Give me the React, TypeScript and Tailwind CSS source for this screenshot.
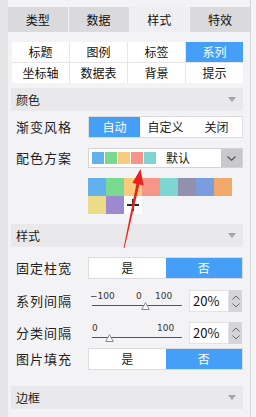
const PALETTE = ['#63b1ec', '#79d98e', '#f8cb80', '#f7958a', '#7dd6cf', '#9191ae', '#7a9ce0', '#f0a86b']

function Caret() {
  return (
    <svg width="8" height="5" viewBox="0 0 8 5">
      <path d="M0 0h8L4 5z" fill="#a6a6aa" />
    </svg>
  )
}

function SectionHeader(props: { title: string; className?: string }) {
  return (
    <div
      className={`ml-[3px] mr-[7px] flex h-[23px] items-center justify-between bg-[#e9e9eb] pl-[5px] pr-[7px] text-[12px] text-[#222] ${props.className ?? ''}`}
    >
      <span>{props.title}</span>
      <Caret />
    </div>
  )
}

function Row(props: { label: string; className?: string; children: React.ReactNode }) {
  return (
    <div className={`ml-[3px] mr-[7px] flex items-center ${props.className ?? ''}`}>
      <div className="w-[77px] shrink-0 pl-[5px] text-[13px] tracking-[1px] text-[#222]">{props.label}</div>
      {props.children}
    </div>
  )
}

function Seg(props: { items: string[]; active: number }) {
  return (
    <div className="flex h-[22px] flex-1 border border-[#dcdce0] bg-white">
      {props.items.map((t, i) => (
        <div
          key={t}
          className={`flex flex-1 items-center justify-center text-[12px] ${
            i === props.active ? 'bg-[#459ff6] text-white' : 'text-[#222]'
          }`}
        >
          {t}
        </div>
      ))}
    </div>
  )
}

function NumberBox() {
  return (
    <div className="ml-[7px] flex">
      <div className="flex h-[22px] w-[40px] items-center border border-[#e2e2e6] bg-white pl-[3px] text-[13px] text-[#111]">
        20%
      </div>
      <div className="flex h-[22px] w-[13px] flex-col items-center justify-center gap-[3px] bg-[#d5d5d9]">
        <svg width="8" height="5" viewBox="0 0 8 5">
          <path d="M0.5 4.5L4 1l3.5 3.5" fill="none" stroke="#666" strokeWidth="1" />
        </svg>
        <svg width="8" height="5" viewBox="0 0 8 5">
          <path d="M0.5 0.5L4 4l3.5-3.5" fill="none" stroke="#666" strokeWidth="1" />
        </svg>
      </div>
    </div>
  )
}

function Slider(props: { marks: { text: string; left: number }[]; thumb: number }) {
  return (
    <div className="relative ml-[4px] h-[22px] w-[90px] shrink-0 font-['DejaVu_Sans',sans-serif] text-[9px] leading-none text-[#333]">
      {props.marks.map((m) => (
        <span key={m.text} className="absolute top-[2px]" style={{ left: m.left }}>
          {m.text}
        </span>
      ))}
      <div className="absolute left-0 right-0 top-[15px] h-px bg-[#555]" />
      <svg className="absolute top-[12px]" style={{ left: props.thumb - 4 }} width="9" height="8" viewBox="0 0 9 8">
        <path d="M4.5 0.7L8.3 7.5H0.7z" fill="#fff" stroke="#888" strokeWidth="1" />
      </svg>
    </div>
  )
}

export default function App() {
  return (
    <div className="relative flex h-[417px] w-[256px] overflow-hidden bg-[#f3f3f5] font-['Noto_Sans_CJK_SC',sans-serif] text-[#222]">
      <div className="w-[8px] shrink-0 bg-[#e5e5e7]" />
      <div className="w-[242px] shrink-0 pt-[7px]">
        <div className="flex h-[25px] gap-px">
          {['类型', '数据', '样式', '特效'].map((t) => (
            <div
              key={t}
              className={`flex flex-1 items-center justify-center text-[12px] text-[#111] ${
                t === '样式' ? 'bg-[#efeff2]' : 'bg-[#dadadd]'
              }`}
            >
              {t}
            </div>
          ))}
        </div>

        <div className="ml-[4px] mr-[7px] mt-[10px] grid grid-cols-4 gap-px bg-[#e6e6e8]">
          {['标题', '图例', '标签', '系列', '坐标轴', '数据表', '背景', '提示'].map((t) => (
            <div
              key={t}
              className={`flex h-[20px] items-center justify-center text-[12px] ${
                t === '系列' ? 'bg-[#459ff6] text-white' : 'bg-white text-[#111]'
              }`}
            >
              {t}
            </div>
          ))}
        </div>

        <SectionHeader title="颜色" className="mt-[5px]" />

        <Row label="渐变风格" className="mt-[5px]">
          <Seg items={['自动', '自定义', '关闭']} active={0} />
        </Row>

        <Row label="配色方案" className="mt-[10px]">
          <div className="flex h-[20px] flex-1 items-center border border-[#d4d4d8] bg-white">
            <div className="flex gap-px pl-[3px]">
              {PALETTE.slice(0, 5).map((c) => (
                <div key={c} className="h-[12px] w-[12px]" style={{ background: c }} />
              ))}
            </div>
            <span className="ml-[10px] flex-1 text-[12px]">默认</span>
            <div className="flex h-full w-[21px] items-center justify-center bg-[#c9c9cd]">
              <svg width="9" height="5" viewBox="0 0 9 5">
                <path d="M0.5 0.5L4.5 4.3l4-3.8" fill="none" stroke="#555" strokeWidth="1.2" />
              </svg>
            </div>
          </div>
        </Row>

        <div className="ml-[80px] mt-[10px] grid w-[144px] grid-cols-8">
          {PALETTE.map((c) => (
            <div key={c} className="h-[18px]" style={{ background: c }} />
          ))}
          <div className="h-[18px] bg-[#ecdc8a]" />
          <div className="h-[18px] bg-[#9c89d0]" />
          <div className="flex h-[18px] items-center justify-center bg-white">
            <svg width="12" height="12" viewBox="0 0 12 12">
              <path d="M0 6h12M6 0v12" stroke="#2a2a2a" strokeWidth="2" />
            </svg>
          </div>
        </div>

        <SectionHeader title="样式" className="mt-[10px]" />

        <Row label="固定柱宽" className="mt-[10px]">
          <Seg items={['是', '否']} active={1} />
        </Row>

        <Row label="系列间隔" className="mt-[11px]">
          <Slider
            marks={[
              { text: '−100', left: -2 },
              { text: '0', left: 44 },
              { text: '100', left: 63 },
            ]}
            thumb={53}
          />
          <NumberBox />
        </Row>

        <Row label="分类间隔" className="mt-[10px]">
          <Slider
            marks={[
              { text: '0', left: 0 },
              { text: '100', left: 65 },
            ]}
            thumb={17}
          />
          <NumberBox />
        </Row>

        <Row label="图片填充" className="mt-[4px]">
          <Seg items={['是', '否']} active={1} />
        </Row>

        <SectionHeader title="边框" className="mt-[16px]" />
      </div>
      <div className="w-[6px] shrink-0 border-l border-[#d6d6da] bg-[#f5f5f7]" />

      <svg className="pointer-events-none absolute left-0 top-0" width="256" height="417" viewBox="0 0 256 417">
        <path d="M123.6 248L124.4 248.2L139.6 183.6L136.6 182.9z" fill="#e8231f" />
        <path d="M140.5 169L143.6 185.4L132.4 182.9z" fill="#e8231f" />
      </svg>
    </div>
  )
}
